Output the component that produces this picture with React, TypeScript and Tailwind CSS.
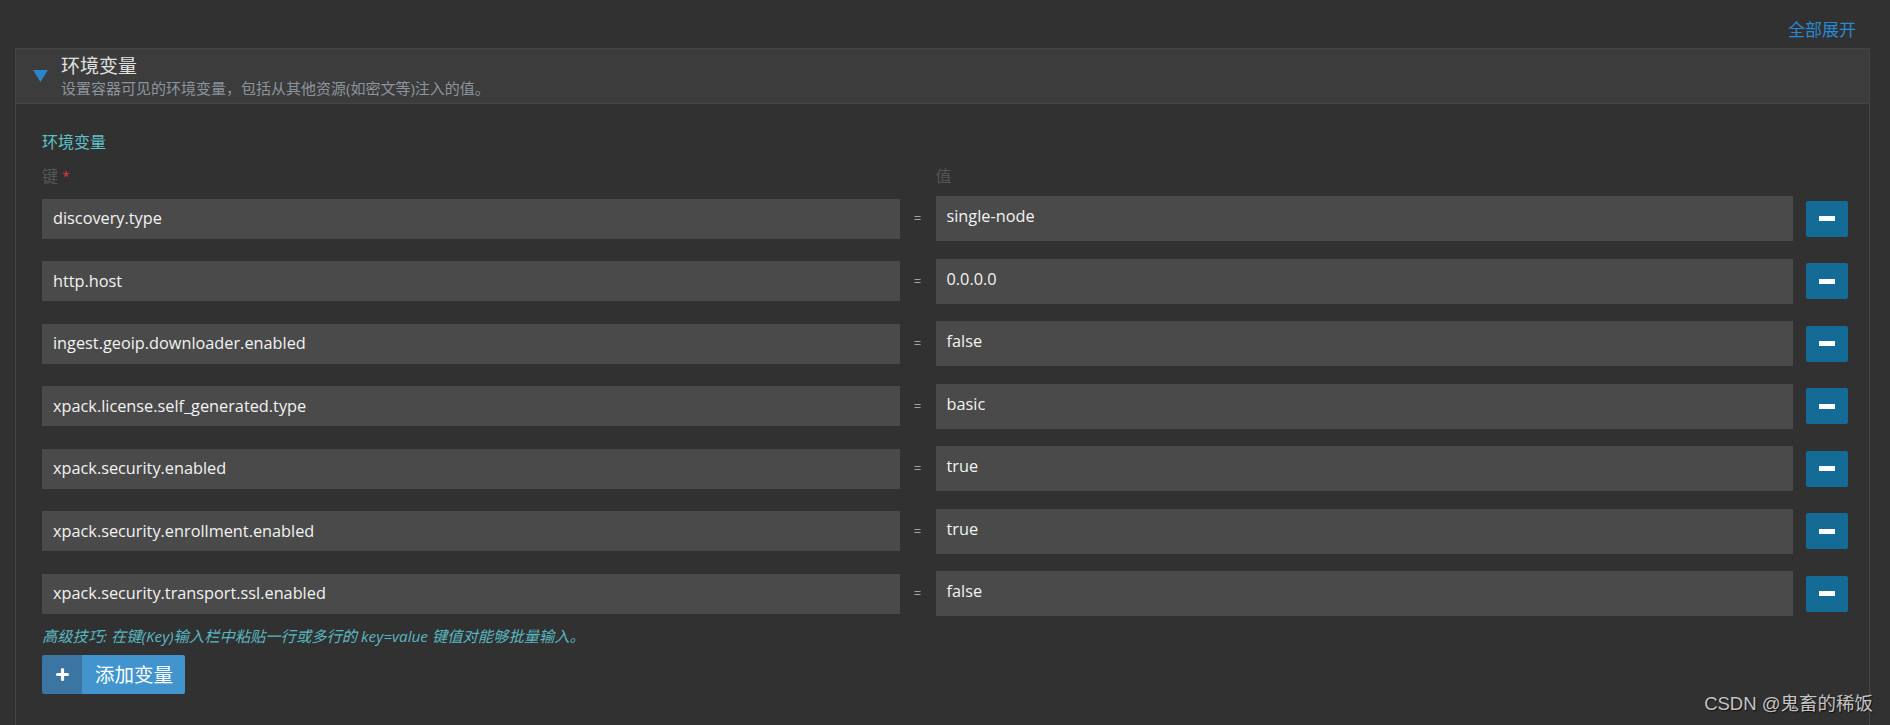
import { Plus } from "lucide-react";

const envVars = [
  { key: "discovery.type", value: "single-node" },
  { key: "http.host", value: "0.0.0.0" },
  { key: "ingest.geoip.downloader.enabled", value: "false" },
  { key: "xpack.license.self_generated.type", value: "basic" },
  { key: "xpack.security.enabled", value: "true" },
  { key: "xpack.security.enrollment.enabled", value: "true" },
  { key: "xpack.security.transport.ssl.enabled", value: "false" },
];

const font = "font-['Open_Sans','Noto_Sans_CJK_SC',sans-serif]";

function EnvRow({ k, v }: { k: string; v: string }) {
  return (
    <div className="flex items-center h-[45px]">
      <div className="flex-1 h-[40px] bg-[#4a4a4a] flex items-center pl-[11px] text-[16.3px] text-[#f2f2f2]">{k}</div>
      <div className="w-[36px] text-center text-[13px] text-[#9aa3a8] leading-none">=</div>
      <div className="flex-1 h-[45px] bg-[#4a4a4a] flex items-center pl-[11px] pb-[4px] text-[16.3px] text-[#f2f2f2]">{v}</div>
      <button className="ml-[13px] w-[42px] h-[36px] rounded-[2px] bg-[#136b96] flex items-center justify-center">
        <span className="block w-[16px] h-[5px] bg-white" />
      </button>
    </div>
  );
}

export default function App() {
  return (
    <div className={`relative w-[1890px] h-[725px] overflow-hidden bg-[#313131] pl-[15px] pr-[20px] ${font}`}>
      <div className="flex justify-end h-[48px] pt-[18px] pr-[14px]">
        <span className="text-[17px] leading-[24px] text-[#2a88d0] cursor-pointer">全部展开</span>
      </div>

      <div className="border border-[#444444] h-[700px]">
        {/* header */}
        <div className="h-[55px] bg-[#3c3c3c] border-b border-[#454545] flex items-center">
          <svg width="15" height="12" viewBox="0 0 15 12" className="ml-[17px] mr-[13px]">
            <path d="M0 0 L15 0 L7.5 12 Z" fill="#2a86cb" />
          </svg>
          <div className="flex flex-col">
            <span className="text-[19px] leading-[22px] text-[#e0e0e0]">环境变量</span>
            <span className="text-[15px] leading-[18px] mt-[2px] text-[#8b949c]">
              设置容器可见的环境变量，包括从其他资源(如密文等)注入的值。
            </span>
          </div>
        </div>

        {/* body */}
        <div className="pl-[26px] pr-[21px] pt-[27px]">
          <div className="text-[16px] leading-[22px] text-[#5fc2ca]">环境变量</div>
          <div className="flex mt-[12px] h-[22px] leading-[22px] text-[16px] text-[#50575c]">
            <div className="flex-1">
              键 <span className="text-[#e8363b] text-[13px] align-top">*</span>
            </div>
            <div className="w-[36px]" />
            <div className="flex-1">值</div>
            <div className="w-[55px]" />
          </div>

          <div className="flex flex-col gap-[17.5px] mt-[9px]">
            {envVars.map((e) => (
              <EnvRow key={e.key} k={e.key} v={e.value} />
            ))}
          </div>

          <div className="mt-[10px] text-[15.3px] leading-[20px] italic text-[#58b6c0]">
            高级技巧: 在键(Key)输入栏中粘贴一行或多行的 key=value 键值对能够批量输入。
          </div>

          <button className="mt-[9px] flex h-[39px] rounded-[2px] overflow-hidden">
            <span className="w-[40px] h-full bg-[#3a76a1] flex items-center justify-center">
              <Plus size={17} strokeWidth={4.5} color="#ffffff" />
            </span>
            <span className="h-full bg-[#4194ce] flex items-center pl-[13px] pr-[12px] text-[19.5px] text-white">
              添加变量
            </span>
          </button>
        </div>
      </div>

      <div className="absolute right-[17px] bottom-[7px] text-[18.5px] text-[#c4c4c4] font-['Liberation_Sans','Noto_Sans_CJK_SC',sans-serif] [text-shadow:1px_1px_1px_#111]">
        CSDN @鬼畜的稀饭
      </div>
    </div>
  );
}
